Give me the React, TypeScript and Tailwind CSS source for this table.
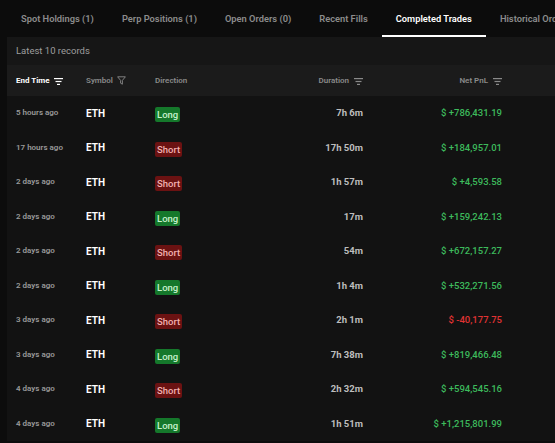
import React from 'react';

interface Trade {
  time: string;
  dir: 'Long' | 'Short';
  duration: string;
  pnl: string;
}

const tabs = [
  'Spot Holdings (1)',
  'Perp Positions (1)',
  'Open Orders (0)',
  'Recent Fills',
  'Completed Trades',
  'Historical Orders',
];

const trades: Trade[] = [
  { time: '5 hours ago', dir: 'Long', duration: '7h 6m', pnl: '$ +786,431.19' },
  { time: '17 hours ago', dir: 'Short', duration: '17h 50m', pnl: '$ +184,957.01' },
  { time: '2 days ago', dir: 'Short', duration: '1h 57m', pnl: '$ +4,593.58' },
  { time: '2 days ago', dir: 'Long', duration: '17m', pnl: '$ +159,242.13' },
  { time: '2 days ago', dir: 'Short', duration: '54m', pnl: '$ +672,157.27' },
  { time: '2 days ago', dir: 'Long', duration: '1h 4m', pnl: '$ +532,271.56' },
  { time: '3 days ago', dir: 'Short', duration: '2h 1m', pnl: '$ -40,177.75' },
  { time: '3 days ago', dir: 'Long', duration: '7h 38m', pnl: '$ +819,466.48' },
  { time: '4 days ago', dir: 'Short', duration: '2h 32m', pnl: '$ +594,545.16' },
  { time: '4 days ago', dir: 'Long', duration: '1h 51m', pnl: '$ +1,215,801.99' },
];

function SortIcon({ className = '' }: { className?: string }) {
  return (
    <svg width="9" height="7" viewBox="0 0 9 7" className={className}>
      <rect x="0" y="0" width="9" height="1.2" fill="currentColor" />
      <rect x="1.5" y="2.9" width="6" height="1.2" fill="currentColor" />
      <rect x="3" y="5.8" width="3" height="1.2" fill="currentColor" />
    </svg>
  );
}

function FunnelIcon() {
  return (
    <svg width="9" height="9" viewBox="0 0 9 9" fill="none" stroke="currentColor" strokeWidth="0.9">
      <path d="M0.6 0.8 H8.4 L5.4 4.4 V8.2 L3.6 7.2 V4.4 Z" strokeLinejoin="round" />
    </svg>
  );
}

export default function App() {
  return (
    <div
      className="w-[555px] h-[443px] overflow-hidden bg-[#0c0c0c] text-white"
      style={{ fontFamily: 'Roboto, "Liberation Sans", sans-serif' }}
    >
      {/* tabs */}
      <div className="flex h-[37px] pl-[7px] whitespace-nowrap">
        {tabs.map((t) => {
          const active = t === 'Completed Trades';
          return (
            <div
              key={t}
              className={
                'relative flex items-center px-[14px] text-[9.3px] font-semibold ' +
                (active ? 'text-white' : 'text-[#8c8c8c]')
              }
            >
              {t}
              {active && <div className="absolute left-0 right-0 bottom-0 h-[2px] bg-white" />}
            </div>
          );
        })}
      </div>

      {/* panel */}
      <div className="ml-[7px] bg-[#121212]">
        <div className="flex items-center h-[28px] pl-[9px] bg-[#161616] text-[9.5px] text-[#9e9e9e]">
          Latest 10 records
        </div>

        <div className="flex items-center h-[31px] pl-[9px] bg-[#1b1b1b] text-[8px] font-semibold text-[#8a8a8a] whitespace-nowrap">
          <div className="w-[70px] flex items-center gap-[4px] text-white font-bold">
            End Time <SortIcon className="mt-[1px]" />
          </div>
          <div className="w-[69px] flex items-center gap-[4px]">
            Symbol <FunnelIcon />
          </div>
          <div className="w-[60px]">Direction</div>
          <div className="w-[148px] flex items-center justify-end gap-[5px]">
            Duration <SortIcon className="mt-[1px]" />
          </div>
          <div className="w-[139px] flex items-center justify-end gap-[5px]">
            Net PnL <SortIcon className="mt-[1px]" />
          </div>
        </div>

        {trades.map((r, i) => (
          <div key={i} className="flex items-center h-[34.5px] pl-[9px] whitespace-nowrap">
            <div className="w-[70px] text-[8px] font-semibold text-[#9a9a9a]">{r.time}</div>
            <div className="w-[69px] text-[10px] font-bold text-white">ETH</div>
            <div className="w-[60px]">
              <span
                className={
                  'inline-block px-[2px] leading-[15px] rounded-[2px] text-[9.5px] font-medium ' +
                  (r.dir === 'Long' ? 'bg-[#15782b] text-[#c6f2cd]' : 'bg-[#6b1212] text-[#f2b0b0]')
                }
              >
                {r.dir}
              </span>
            </div>
            <div className="w-[148px] text-right text-[9.5px] font-bold text-[#bdbdbd]">{r.duration}</div>
            <div
              className={
                'w-[139px] text-right text-[9.5px] font-medium ' +
                (r.pnl.includes('-') ? 'text-[#e03333]' : 'text-[#3dba5c]')
              }
            >
              {r.pnl}
            </div>
          </div>
        ))}
      </div>
    </div>
  );
}
